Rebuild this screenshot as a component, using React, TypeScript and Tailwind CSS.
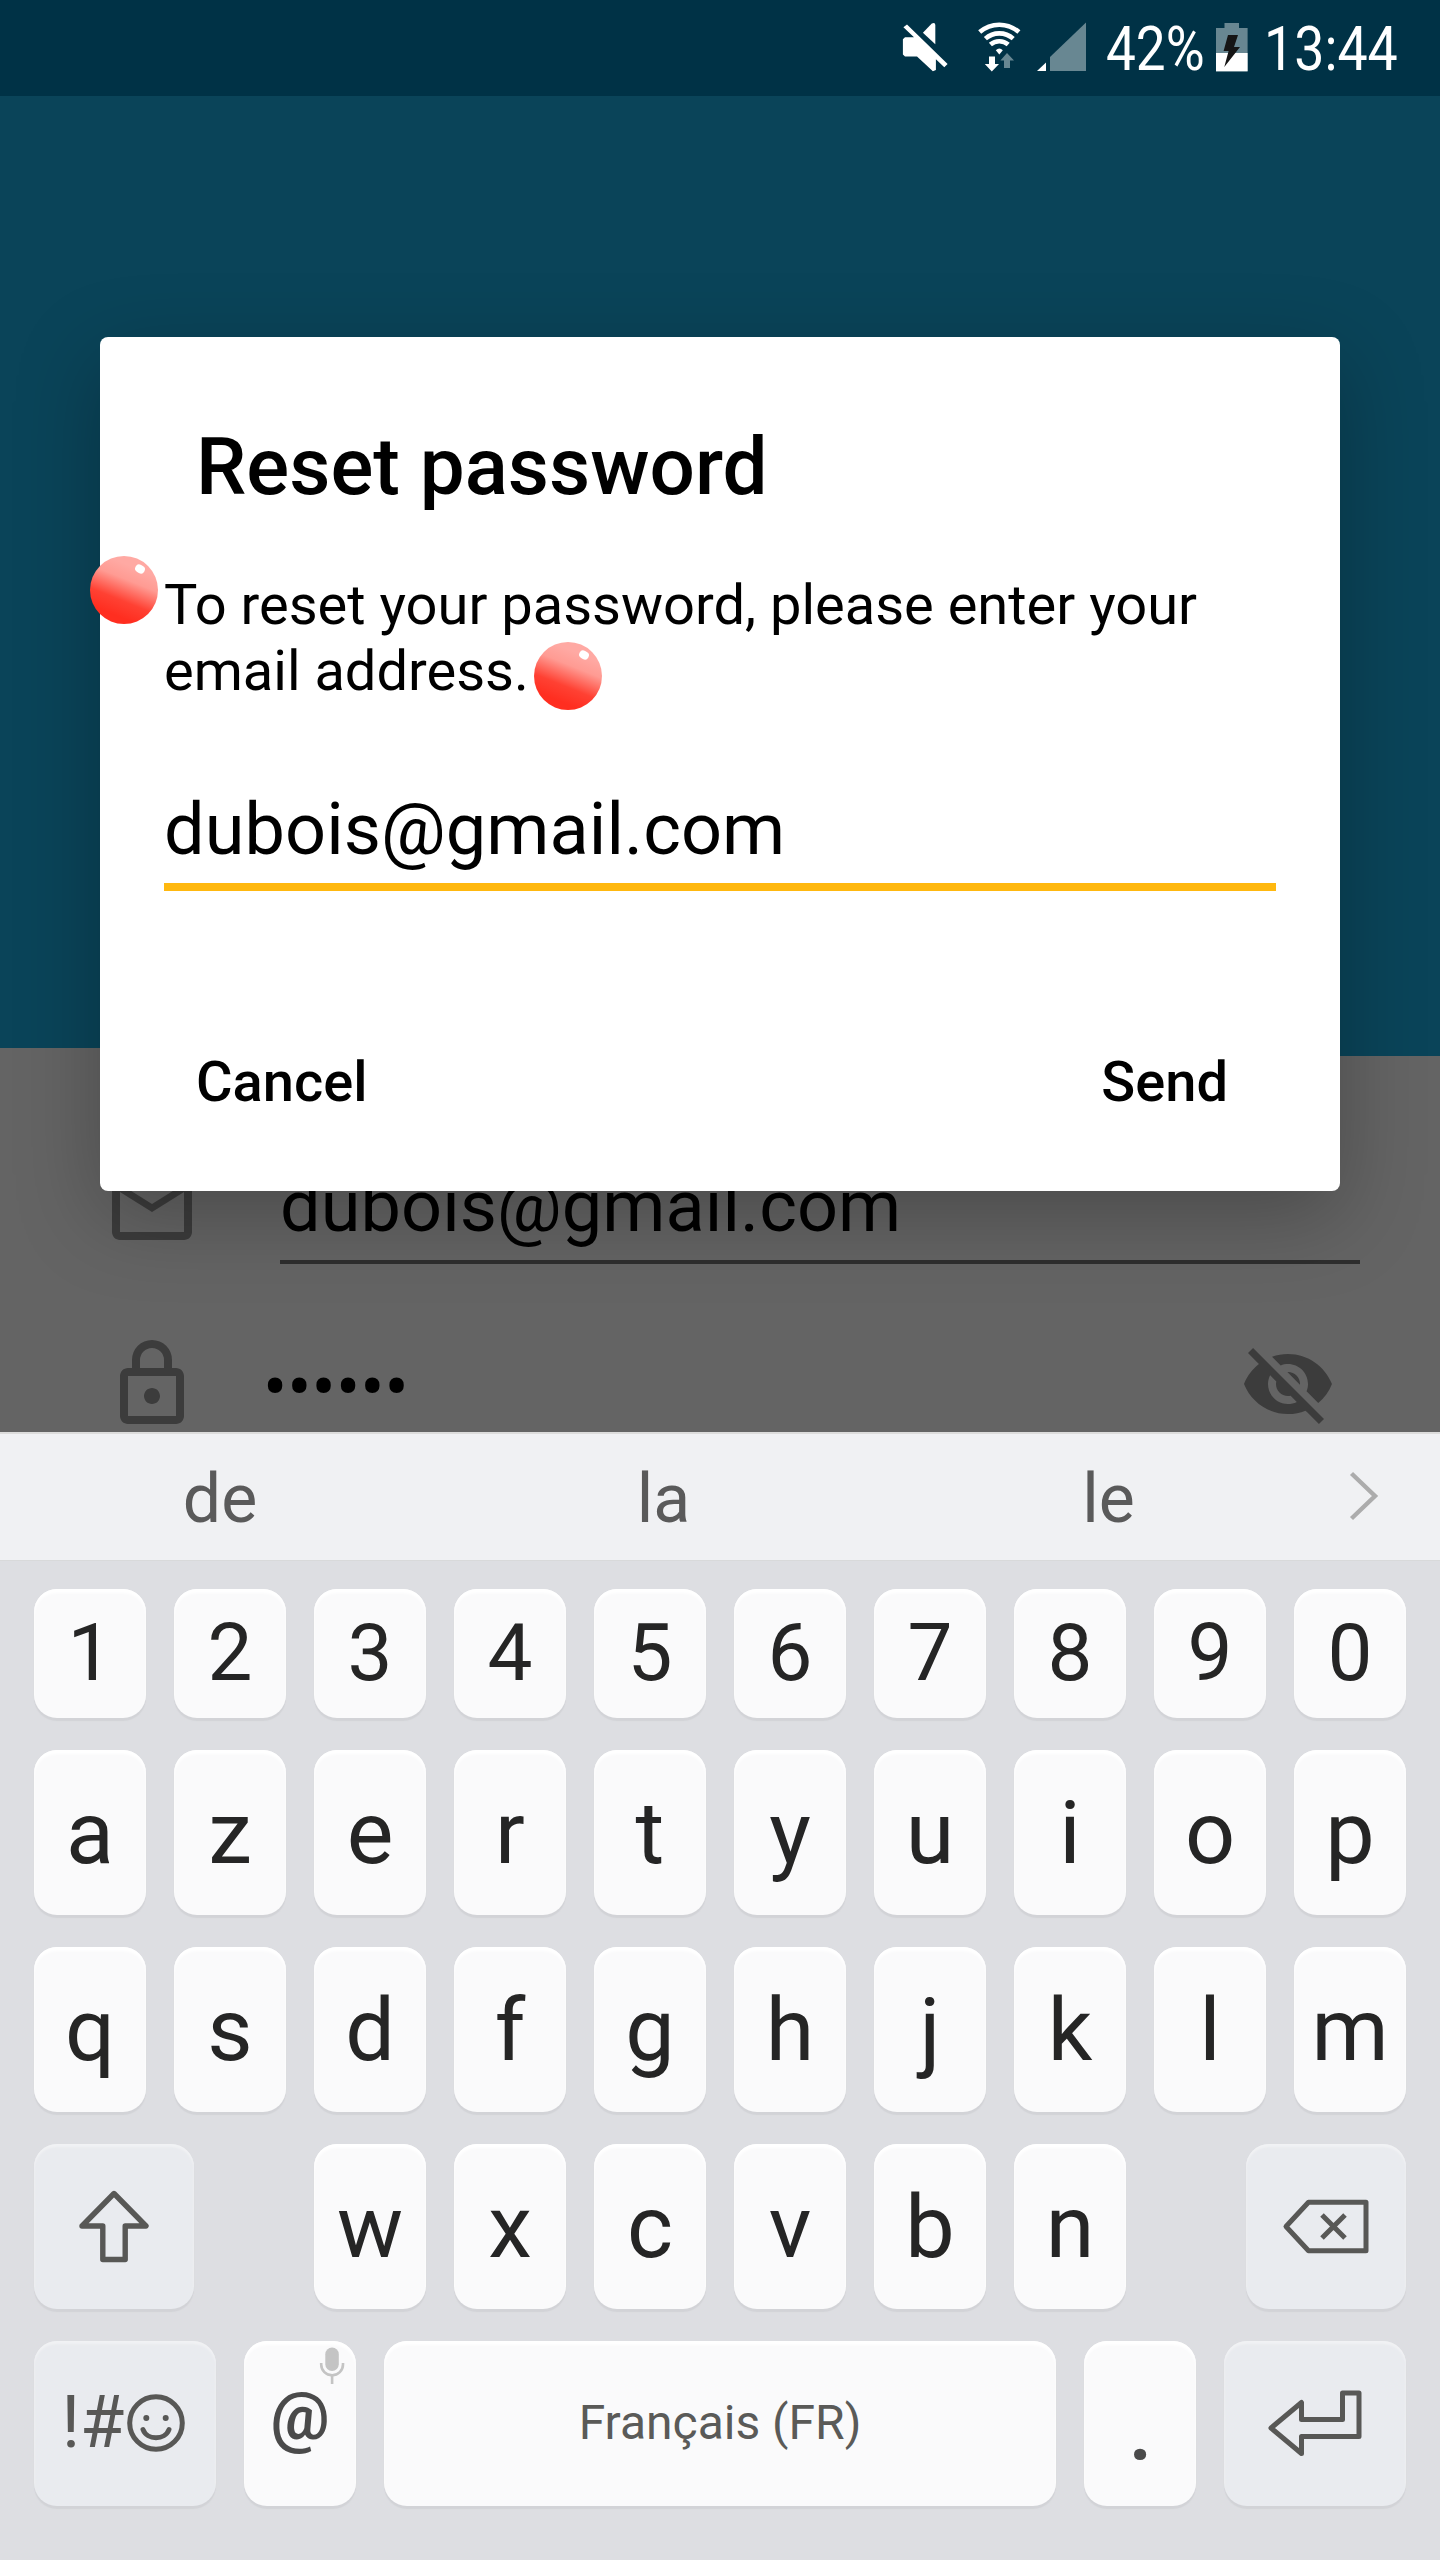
import type { ReactNode } from "react";

function MuteIcon() {
  return (
    <svg className="h-[52px] w-[48px]" viewBox="901 21 48 52" fill="#fff">
      <path d="M902.9 39.3 905 37.3H914L903.4 27.3 907 24.5 947.6 64 944.3 67.2 935.9 59.3V70L932.9 71.2 917 56.6H905L902.9 54.6Z" />
      <path d="M922.9 32.7 931.8 23.5Q935.2 21.8 935.3 25V44.2Z" />
    </svg>
  );
}

function WifiIcon() {
  return (
    <svg className="h-[52px] w-[46px]" viewBox="976 21 46 52" fill="none">
      <g stroke="#fff" strokeWidth="4.6">
        <path d="M979.7 32.1A29.7 29.7 0 0 1 1018.9 32.1" />
        <path d="M985.4 38.6A21 21 0 0 1 1013.2 38.6" />
        <path d="M990.4 44.6A13.5 13.5 0 0 1 1008.2 44.6" />
      </g>
      <path d="M999.3 54.6 995.8 50.2Q999.3 46.6 1002.8 50.2Z" fill="#fff" />
      <path d="M989 56.5H995V64H999L991.8 71.6 984.8 64H989Z" fill="#fff" />
      <path d="M1007 53 1014 60.5H1010V68H1004V60.5H1000.4Z" fill="#688792" />
    </svg>
  );
}

function SignalIcon() {
  return (
    <svg className="h-[52px] w-[52px]" viewBox="1036 21 52 52">
      <path d="M1037 71 1046 62.5V71Z" fill="#fff" />
      <path d="M1050 71V57L1086 22.5V71Z" fill="#688792" />
    </svg>
  );
}

function BatteryIcon() {
  return (
    <svg className="h-[52px] w-[32px]" viewBox="1216 21 32 52">
      <path d="M1224.5 23H1239V28H1247.6V72H1216V28H1224.5Z" fill="#688792" />
      <path d="M1216 53H1247.6V71H1216Z" fill="#fff" />
      <path d="M1228 35H1238L1234 47H1240L1224.3 67 1228.6 51H1223.6Z" fill="#151515" />
    </svg>
  );
}

function StatusBar() {
  return (
    <header className="relative flex h-[96px] shrink-0 bg-[#003246] pt-[21px] text-white">
      <div className="flex pl-[901px]">
        <MuteIcon />
        <div className="ml-[27px]">
          <WifiIcon />
        </div>
        <div className="ml-[14px]">
          <SignalIcon />
        </div>
      </div>
      <div className="ml-[18px] w-[98px]">
        <span className="inline-block origin-left scale-x-[0.878] text-[60.500px] leading-[57px] whitespace-nowrap">42%</span>
      </div>
      <div className="ml-[12px]">
        <BatteryIcon />
      </div>
      <div className="ml-[16px]">
        <span className="inline-block origin-left scale-x-[0.888] text-[60.500px] leading-[57px] whitespace-nowrap">13:44</span>
      </div>
    </header>
  );
}

function Ball() {
  return (
    <div className="relative h-[68px] w-[68px] rounded-full bg-[linear-gradient(202deg,#ffa9a3_22%,#ff9b93_38%,#ff4133_62%,#ff2e20_80%)]">
      <span className="absolute top-[9px] left-[45px] h-[8px] w-[10px] rotate-[30deg] rounded-full bg-white" />
    </div>
  );
}

function LoginForm() {
  return (
    <main className="flex h-[376px] flex-col bg-[#646464] text-black">
      <div className="flex pt-[104px] pl-[104px]">
        <svg className="h-[96px] w-[96px]" viewBox="0 0 24 24" fill="#3c3c3c">
          <path d="M20 4H4c-1.1 0-1.99.9-1.99 2L2 18c0 1.1.9 2 2 2h16c1.1 0 2-.9 2-2V6c0-1.1-.9-2-2-2zm0 14H4V8l8 5 8-5v10zm-8-7L4 6h16l-8 5z" />
        </svg>
        <div className="mt-[5px] ml-[80px] h-[99px] w-[1080px] border-b-4 border-[#2e2e2e] text-[72px] leading-[84px] tracking-[0.1px]">
          dubois@gmail.com
        </div>
      </div>
      <div className="mt-[72px] flex pl-[104px]">
        <svg className="h-[96px] w-[96px]" viewBox="0 0 24 24" fill="#3c3c3c">
          <path d="M18 8h-1V6A5 5 0 0 0 7 6v2H6c-1.1 0-2 .9-2 2v10c0 1.1.9 2 2 2h12c1.1 0 2-.9 2-2V10c0-1.1-.9-2-2-2zM9 6a3 3 0 0 1 6 0v2H9V6zm9 14H6V10h12v10zm-6-3c1.1 0 2-.9 2-2s-.9-2-2-2-2 .9-2 2 .9 2 2 2z" />
        </svg>
        <div className="ml-[63px] w-[977px] pt-[10px] text-[72px] leading-[84px]">••••••</div>
        <svg className="h-[96px] w-[96px]" viewBox="0 0 24 24" fill="#3c3c3c">
          <path d="M12 7c2.76 0 5 2.24 5 5 0 .65-.13 1.26-.36 1.83l2.92 2.92c1.51-1.26 2.7-2.89 3.43-4.75-1.73-4.39-6-7.5-11-7.5-1.4 0-2.74.25-3.98.7l2.16 2.16C10.74 7.13 11.35 7 12 7zM2 4.27l2.28 2.28.46.46C3.08 8.3 1.78 10.02 1 12c1.73 4.39 6 7.5 11 7.5 1.55 0 3.03-.3 4.38-.84l.42.42L19.73 22 21 20.73 3.27 3 2 4.27zM7.53 9.8l1.55 1.55c-.05.21-.08.43-.08.65 0 1.66 1.34 3 3 3 .22 0 .44-.03.65-.08l1.55 1.55c-.67.33-1.41.53-2.2.53-2.76 0-5-2.24-5-5 0-.79.2-1.53.53-2.2zm4.31-.78l3.15 3.15.02-.16c0-1.66-1.34-3-3-3l-.17.01z" />
        </svg>
      </div>
    </main>
  );
}

function ResetDialog() {
  return (
    <div className="absolute top-[337px] left-[100px] h-[854px] w-[1240px] rounded-[8px] bg-white text-black shadow-[0_24px_84px_rgba(0,0,0,0.26)]">
      <h1 className="pt-[82px] pl-[96px] text-[80px] leading-[96px] font-medium">Reset password</h1>
      <p className="mt-[57px] ml-[64px] text-[56px] leading-[66px] whitespace-nowrap">
        To reset your password, please enter your
        <br />
        email address.
      </p>
      <div className="mx-[64px] mt-[84px] h-[103px] border-b-8 border-[#ffb80f] text-[72px] leading-[84px] tracking-[0.1px]">
        dubois@gmail.com
      </div>
      <div className="mt-[158px] flex justify-between pr-[112px] pl-[96px] text-[56px] leading-[66px] font-medium">
        <button>Cancel</button>
        <button>Send</button>
      </div>
      <div className="absolute top-[219px] left-[-10px]">
        <Ball />
      </div>
      <div className="absolute top-[305px] left-[434px]">
        <Ball />
      </div>
    </div>
  );
}

function Key({ children, size = "w-[112px]", muted = false }: { children?: ReactNode; size?: string; muted?: boolean }) {
  const tone = muted
    ? "bg-[#e9ebef] shadow-[0_3px_1px_#d2d3d7,inset_0_3px_2px_#f1f2f4]"
    : "bg-[#fafafb] shadow-[0_3px_1px_#d2d3d7,inset_0_4px_3px_#ffffff]";
  return (
    <div className={`relative flex h-full shrink-0 items-center justify-center rounded-[23px] ${size} ${tone}`}>{children}</div>
  );
}

function Letters({ keys }: { keys: string }) {
  return (
    <>
      {keys.split("").map((k) => (
        <Key key={k}>{k}</Key>
      ))}
    </>
  );
}

const ink = "#585856";

function Keyboard() {
  return (
    <section className="flex h-[1128px] flex-col bg-[#dddee2] text-[#252525]">
      <div className="flex h-[128px] shrink-0 border-t-2 border-[#dcdcdb] bg-[#f0f1f3] text-[68px] leading-[80px] text-[#5a5a5a]">
        <div className="w-[440px] pt-[25px] text-center">de</div>
        <div className="w-[447px] pt-[25px] text-center">la</div>
        <div className="w-[443px] pt-[25px] text-center">le</div>
        <svg className="mt-[34px] ml-[16px] h-[56px] w-[36px]" viewBox="1346 1468 36 56" fill="none" stroke="#acacac" strokeWidth="4.4">
          <path d="M1351.5 1473.5 1375 1496 1351.5 1518.5" />
        </svg>
      </div>
      <div className="flex flex-col gap-8 border-t border-[#d8d9da] px-[34px] pt-[28px] text-[88px] leading-[103px]">
        <div className="flex h-[129px] gap-[28px] text-[80px]">
          <Letters keys="1234567890" />
        </div>
        <div className="flex h-[165px] gap-[28px]">
          <Letters keys="azertyuiop" />
        </div>
        <div className="flex h-[165px] gap-[28px]">
          <Letters keys="qsdfghjklm" />
        </div>
        <div className="flex h-[165px] justify-between">
          <Key size="w-[160px]" muted>
            <svg className="h-[80px] w-[80px]" viewBox="74 2186.5 80 80" fill="none" stroke={ink} strokeWidth="5.4" strokeLinejoin="round">
              <path d="M114 2193 146 2225.5H125.2V2259H102.8V2225.5H82Z" />
            </svg>
          </Key>
          <div className="flex gap-[28px]">
            <Letters keys="wxcvbn" />
          </div>
          <Key size="w-[160px]" muted>
            <svg className="h-[80px] w-[100px]" viewBox="1276 2186.5 100 80" fill="none" stroke={ink} strokeWidth="5" strokeLinejoin="round">
              <path d="M1286 2226 1308.5 2201.8H1366V2250.2H1308.5Z" />
              <path d="M1322 2214.5 1345 2237.500M1345 2214.500 1322 2237.500" />
            </svg>
          </Key>
        </div>
        <div className="flex h-[165px] gap-[28px]">
          <Key size="w-[182px]" muted>
            <span className="pb-[2px] text-[72px] text-[#585856]">!#</span>
            <svg className="mr-[2px] mb-[2px] ml-[2px] h-[60px] w-[60px]" viewBox="0 0 60 60" fill="none" stroke={ink} strokeWidth="5">
              <circle cx="30" cy="30" r="26.3" />
              <path d="M17 36.500C21 47.500 39 47.500 43 36.500" strokeLinecap="round" />
              <circle cx="20.300" cy="25" r="3" fill={ink} stroke="none" />
              <circle cx="39.700" cy="25" r="3" fill={ink} stroke="none" />
            </svg>
          </Key>
          <Key>
            <span className="pb-[14px] text-[66px] font-semibold text-[#4a4a4a]">@</span>
            <svg className="absolute top-[4px] right-[10px] h-[42px] w-[28px]" viewBox="318 2345 28 42" fill="none" stroke="#c4c4c4" strokeWidth="2.600">
              <rect x="325.300" y="2347.500" width="13.500" height="23.500" rx="6.700" fill="#c4c4c4" stroke="none" />
              <path d="M321.200 2363V2364.500A10.900 10.900 0 0 0 343 2364.500V2363M332.100 2375V2384" />
            </svg>
          </Key>
          <Key size="w-[672px]">
            <span className="pb-[2px] text-[48px] text-[#5a5a58]">Français (FR)</span>
          </Key>
          <Key>
            <span className="pt-[9px] pl-[1px] font-medium text-[#4a4a4a]">.</span>
          </Key>
          <Key size="w-[182px]" muted>
            <svg className="h-[80px] w-[104px]" viewBox="1263 2383.500 104 80" fill="none" stroke={ink} strokeWidth="5" strokeLinejoin="round">
              <path d="M1271 2427.500 1301.500 2402V2419H1342.500V2392.500H1359V2436H1301.500V2453Z" />
            </svg>
          </Key>
        </div>
      </div>
    </section>
  );
}

export default function App() {
  return (
    <div className="relative flex h-[2560px] w-[1440px] flex-col overflow-hidden bg-[#0a4459] font-[Roboto,sans-serif]">
      <StatusBar />
      <div className="flex h-[960px] shrink-0 items-end">
        <div className="h-[8px] w-[720px] bg-[#646464]" />
      </div>
      <LoginForm />
      <ResetDialog />
      <div className="relative">
        <Keyboard />
      </div>
    </div>
  );
}
